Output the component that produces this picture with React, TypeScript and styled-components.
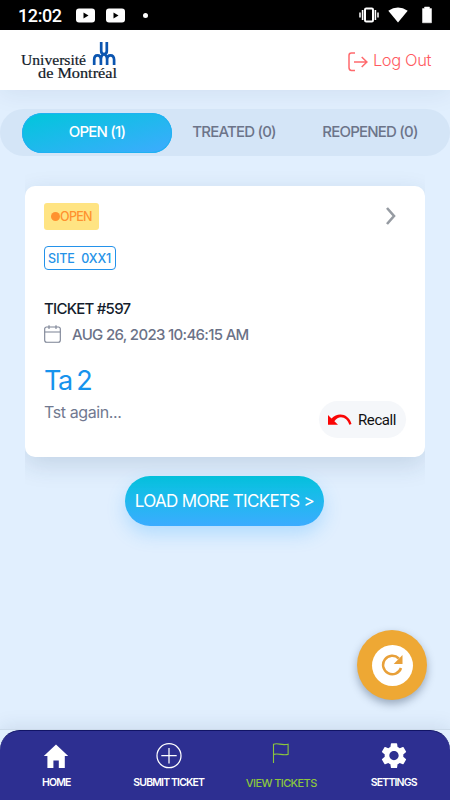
import React from "react";
import styled, { createGlobalStyle } from "styled-components";

const GlobalStyle = createGlobalStyle`
  * { box-sizing: border-box; }
  body { margin: 0; background: #e1effe; }
  button { font: inherit; border: 0; padding: 0; background: none; letter-spacing: inherit; }
`;

const Screen = styled.div`
  width: 450px;
  height: 800px;
  display: flex;
  flex-direction: column;
  overflow: hidden;
  position: relative;
  background: #e1effe;
  font-family: Inter, "Liberation Sans", sans-serif;
`;

const StatusBar = styled.div`
  height: 30px;
  flex: none;
  background: #000;
  color: #fff;
  display: flex;
  align-items: center;
  padding: 0 13px 0 18px;
  font: 500 18px/30px Roboto, sans-serif;
  svg { display: block; }
`;
const Clock = styled.span`
  width: 58px;
  letter-spacing: -0.4px;
  padding-top: 1px;
`;
const StatusGroup = styled.div<{ $gap: number }>`
  display: flex;
  align-items: center;
  gap: ${(p) => p.$gap}px;
`;
const Dot = styled.i`
  width: 5px;
  height: 5px;
  border-radius: 50%;
  background: #fff;
  margin-left: 18px;
  margin-right: auto;
`;

const Header = styled.header`
  height: 60px;
  flex: none;
  background: #fff;
  box-shadow: 0 4px 24px rgba(15, 40, 80, 0.07);
  display: flex;
  justify-content: space-between;
  align-items: center;
  padding: 0 19px 0 20px;
`;
const LogOut = styled.button`
  display: flex;
  align-items: center;
  gap: 5px;
  color: #ff5b5f;
  font-size: 16.5px;
  font-weight: 300;
  letter-spacing: -0.4px;
  svg { margin-top: 3px; }
`;

const Tabs = styled.nav`
  height: 47px;
  flex: none;
  margin-top: 19px;
  border-radius: 24px;
  background: #d4e5f7;
  display: grid;
  grid-template-columns: 150px 124px 148px;
  padding: 4px 6px 3px 22px;
`;
const Tab = styled.button<{ $active?: boolean }>`
  border-radius: 20px;
  padding-bottom: 3px;
  font-size: 15px;
  font-weight: 500;
  letter-spacing: -0.8px;
  color: ${(p) => (p.$active ? "#fff" : "#6c7489")};
  background: ${(p) => (p.$active ? "linear-gradient(165deg, #06c4de 10%, #3bacfd 95%)" : "none")};
  box-shadow: ${(p) => (p.$active ? "inset 0 0 0 1px #20b1f2" : "none")};
`;

const Card = styled.article`
  flex: none;
  height: 271px;
  margin: 30px 25px 0;
  padding: 17px 19px 18px;
  border-radius: 10px;
  background: #fff;
  box-shadow: 0 8px 24px rgba(30, 60, 95, 0.15);
  clip-path: inset(-30px 0 -36px 0);
  display: flex;
  flex-direction: column;
  align-items: flex-start;
`;
const CardTop = styled.div`
  width: 100%;
  height: 27px;
  display: flex;
  justify-content: space-between;
  align-items: center;
  padding-right: 5px;
  > svg { margin-top: -2px; }
`;
const Status = styled.span`
  width: 55px;
  height: 27px;
  border-radius: 3px;
  background: #ffe483;
  color: #ff922f;
  display: flex;
  align-items: center;
  padding-left: 7px;
  font-size: 12.5px;
  font-weight: 500;
  letter-spacing: -0.7px;
  &::before {
    content: "";
    width: 9px;
    height: 9px;
    flex: none;
    border-radius: 50%;
    background: currentColor;
  }
`;
const Site = styled.span`
  margin-top: 16px;
  width: 72px;
  height: 24px;
  border: 1px solid #2492ea;
  border-radius: 4px;
  color: #2492e8;
  font-size: 12.5px;
  font-weight: 500;
  line-height: 23px;
  padding-left: 3px;
  white-space: pre;
  letter-spacing: -0.1px;
`;
const TicketNo = styled.h2`
  margin: 30px 0 0;
  font-size: 15px;
  line-height: 18px;
  font-weight: 500;
  letter-spacing: -0.75px;
  color: #141d2d;
`;
const DateRow = styled.div`
  display: flex;
  align-items: center;
  gap: 11px;
  height: 20px;
  margin-top: 6px;
  font-size: 15px;
  font-weight: 500;
  letter-spacing: -0.68px;
  color: #6b7287;
`;
const Title = styled.h3`
  margin: 20px 0 0;
  font-size: 27px;
  line-height: 34px;
  font-weight: 400;
  letter-spacing: -1.5px;
  word-spacing: -1.5px;
  color: #1693ed;
`;
const CardBottom = styled.div`
  width: 100%;
  display: flex;
  justify-content: space-between;
  margin-top: 3px;
`;
const Excerpt = styled.p`
  margin: 0;
  font-size: 16px;
  line-height: 22px;
  letter-spacing: -0.4px;
  color: #717990;
`;
const Recall = styled.button`
  width: 87px;
  height: 37px;
  border-radius: 19px;
  background: #f5f7fa;
  display: flex;
  align-items: center;
  gap: 6px;
  padding-left: 8px;
  color: #111;
  font: 400 15px Roboto, sans-serif;
  letter-spacing: -0.4px;
  svg { margin-top: 1px; }
`;

const LoadMore = styled.button`
  align-self: center;
  flex: none;
  width: 199px;
  height: 50px;
  margin: 19px 1px 0 0;
  border-radius: 25px;
  color: #fff;
  font-size: 17px;
  letter-spacing: -0.67px;
  white-space: nowrap;
  background: linear-gradient(#05c4de, #3bacff);
  box-shadow: 0 8px 18px rgba(59, 172, 255, 0.28);
`;

const Refresh = styled.button`
  position: absolute;
  left: 357px;
  top: 630px;
  width: 70px;
  height: 70px;
  border-radius: 50%;
  background: #eea834;
  box-shadow: 0 4px 8px rgba(20, 40, 70, 0.35);
  display: grid;
  place-items: center;
`;
const RefreshDisc = styled.span`
  width: 41px;
  height: 41px;
  border-radius: 50%;
  background: #fff;
  display: grid;
  place-items: center;
`;

const NavShelf = styled.div`
  margin-top: auto;
  flex: none;
  border-top: 1px solid #ccdbea;
  box-shadow: 0 -2px 18px rgba(20, 50, 90, 0.1);
`;
const BottomNav = styled.nav`
  height: 70px;
  border-radius: 20px 20px 0 0;
  border-top: 1px solid #111466;
  background: #2d2f91;
  display: grid;
  grid-template-columns: repeat(4, 1fr);
`;
const NavItem = styled.button<{ $active?: boolean }>`
  display: flex;
  flex-direction: column;
  align-items: center;
  gap: 6px;
  padding-top: 11px;
  color: ${(p) => (p.$active ? "#8bc63e" : "#fff")};
`;
const NavLabel = styled.span<{ $regular?: boolean }>`
  font-size: ${(p) => (p.$regular ? "11px" : "10.5px")};
  line-height: 14px;
  font-weight: ${(p) => (p.$regular ? 500 : 600)};
  letter-spacing: ${(p) => (p.$regular ? "-0.6px" : "-0.85px")};
`;

const VideoIcon = () => (
  <svg width="19" height="15" viewBox="0 0 19 15">
    <rect y=".5" width="19" height="14" rx="3" fill="#fff" />
    <path d="M7.5 4.5v6l5-3z" fill="#000" />
  </svg>
);

const Logo = () => (
  <svg width="98" height="42" viewBox="0 0 98 42">
    <g fill="none" stroke="#0b55b0" strokeWidth="2.7">
      <path d="M81.2 3v9q0 3 2.8 3t2.8-3V3" />
      <path d="M74.2 26v-5.2q0-4.4 3.3-4.4t3.4 4.4V26M80.9 20.5q.1-4.4 3.1-5.2 3 .8 3.1 5.2M87.1 26v-5.2q0-4.4 3.4-4.4t3.6 4.4V26" />
    </g>
    <g fill="#111a28" stroke="#111a28" strokeWidth=".2" fontFamily="'Liberation Serif', serif" fontSize="14">
      <text x="1" y="25.6" textLength="65" lengthAdjust="spacingAndGlyphs">Université</text>
      <text x="18" y="38.6" textLength="79" lengthAdjust="spacingAndGlyphs">de Montréal</text>
    </g>
  </svg>
);

export default function App() {
  return (
    <Screen>
      <GlobalStyle />
      <StatusBar>
        <Clock>12:02</Clock>
        <StatusGroup $gap={11}>
          <VideoIcon />
          <VideoIcon />
        </StatusGroup>
        <Dot />
        <StatusGroup $gap={9}>
          <svg width="20" height="16" viewBox="0 0 20 16" fill="none" stroke="#fff">
            <rect x="6" y="1.5" width="8" height="13" rx="1.2" strokeWidth="2" />
            <path d="M3.6 3v10M16.4 3v10" strokeWidth="1.6" />
            <path d="M1 5.5v5M19 5.5v5" strokeWidth="1.5" />
          </svg>
          <svg width="20" height="16" viewBox="0 0 20 16">
            <path d="M.3 3.8Q10-2.6 19.7 3.8L10 15.5z" fill="#fff" />
          </svg>
          <svg width="20" height="18" viewBox="0 0 20 18">
            <path d="M7.5 1h5v1.6h2v14.2h-9V2.6h2z" fill="#fff" stroke="#fff" strokeWidth=".5" strokeLinejoin="round" />
          </svg>
        </StatusGroup>
      </StatusBar>
      <Header>
        <Logo />
        <LogOut>
          <svg width="20" height="20" viewBox="0 0 20 20" fill="none" stroke="#ff6a6d" strokeWidth="1.5">
            <path d="M7 1H3.4Q1 1 1 3.4v12.2Q1 18.5 3.4 18.5H7M6 10h13M13.7 5l5.2 5-5.2 5" />
          </svg>
          Log Out
        </LogOut>
      </Header>
      <Tabs>
        <Tab $active>OPEN (1)</Tab>
        <Tab>TREATED (0)</Tab>
        <Tab>REOPENED (0)</Tab>
      </Tabs>
      <Card>
        <CardTop>
          <Status>OPEN</Status>
          <svg width="20" height="20" viewBox="0 0 20 20" fill="none" stroke="#969ba2" strokeWidth="2.6">
            <path d="M6 2l7 8-7 8" />
          </svg>
        </CardTop>
        <Site>{"SITE  0XX1"}</Site>
        <TicketNo>TICKET #597</TicketNo>
        <DateRow>
          <svg width="17" height="18" viewBox="0 0 17 18" fill="none" stroke="#7b8294" strokeWidth="1.1">
            <rect x=".7" y="2" width="15.6" height="15.2" rx="2" />
            <path d="M.7 7h15.6M5 .2V4M12 .2V4" />
          </svg>
          AUG 26, 2023 10:46:15 AM
        </DateRow>
        <Title>Ta 2</Title>
        <CardBottom>
          <Excerpt>Tst again...</Excerpt>
          <Recall>
            <svg width="25" height="12" viewBox="0 0 25 12">
              <path d="M1 1v9.8h10L7.4 7.3C12-.1 20.5 3.2 22.3 10.8l2.2-.7C21.8-.3 11-2.2 4.5 4.5z" fill="#fa0505" />
            </svg>
            Recall
          </Recall>
        </CardBottom>
      </Card>
      <LoadMore>LOAD MORE TICKETS &gt;</LoadMore>
      <Refresh>
        <RefreshDisc>
          <svg width="22" height="22" viewBox="0 0 22 22">
            <path d="M17.8 4.5A9.2 9.2 0 1 0 20 14" fill="none" stroke="#e8a039" strokeWidth="2.5" />
            <path d="M21.5 1v9H12.7z" fill="#e8a039" />
          </svg>
        </RefreshDisc>
      </Refresh>
      <NavShelf>
        <BottomNav>
          <NavItem>
            <svg width="28" height="28" viewBox="0 0 28 28">
              <path d="M14 2.5l12.2 11.6h-3.4V26h-6v-7.5h-5.4V26h-6V14.1H1.8z" fill="#fff" />
            </svg>
            <NavLabel>HOME</NavLabel>
          </NavItem>
          <NavItem>
            <svg width="28" height="28" viewBox="0 0 28 28" fill="none" stroke="#fff" strokeWidth="1.25">
              <circle cx="14" cy="13.7" r="12" />
              <path d="M14 6v15.4M6.3 13.7h15.4" />
            </svg>
            <NavLabel>SUBMIT TICKET</NavLabel>
          </NavItem>
          <NavItem $active>
            <svg width="28" height="28" viewBox="0 0 28 28" fill="none" stroke="#8bc63e" strokeWidth="1.1">
              <path d="M6.5 21V2.2c5-1.7 7.5 1.7 14.6 0v10.2c-6 1.6-9-1.7-14.6 0" />
            </svg>
            <NavLabel $regular>VIEW TICKETS</NavLabel>
          </NavItem>
          <NavItem>
            <svg width="30" height="28" viewBox="1.2 1.5 21.6 21.6">
              <path
                fill="#fff"
                d="M19.14 12.94c.04-.3.06-.61.06-.94 0-.32-.02-.64-.07-.94l2.03-1.58c.18-.14.23-.41.12-.61l-1.92-3.32c-.12-.22-.37-.29-.59-.22l-2.39.96c-.5-.38-1.03-.7-1.62-.94L14.4 2.81c-.04-.24-.24-.41-.48-.41h-3.84c-.24 0-.43.17-.47.41l-.36 2.54c-.59.24-1.13.57-1.62.94l-2.39-.96c-.22-.08-.47 0-.59.22L2.74 8.87c-.12.21-.08.47.12.61l2.03 1.58c-.05.3-.09.63-.09.94s.02.64.07.94l-2.03 1.58c-.18.14-.23.41-.12.61l1.92 3.32c.12.22.37.29.59.22l2.39-.96c.5.38 1.03.7 1.62.94l.36 2.54c.05.24.24.41.48.41h3.84c.24 0 .44-.17.47-.41l.36-2.54c.59-.24 1.13-.56 1.62-.94l2.39.96c.22.08.47 0 .59-.22l1.92-3.32c.12-.22.07-.47-.12-.61l-2.01-1.58zM12 15.6c-1.98 0-3.6-1.62-3.6-3.6s1.62-3.6 3.6-3.6 3.6 1.62 3.6 3.6-1.62 3.6-3.6 3.6z"
              />
            </svg>
            <NavLabel>SETTINGS</NavLabel>
          </NavItem>
        </BottomNav>
      </NavShelf>
    </Screen>
  );
}
